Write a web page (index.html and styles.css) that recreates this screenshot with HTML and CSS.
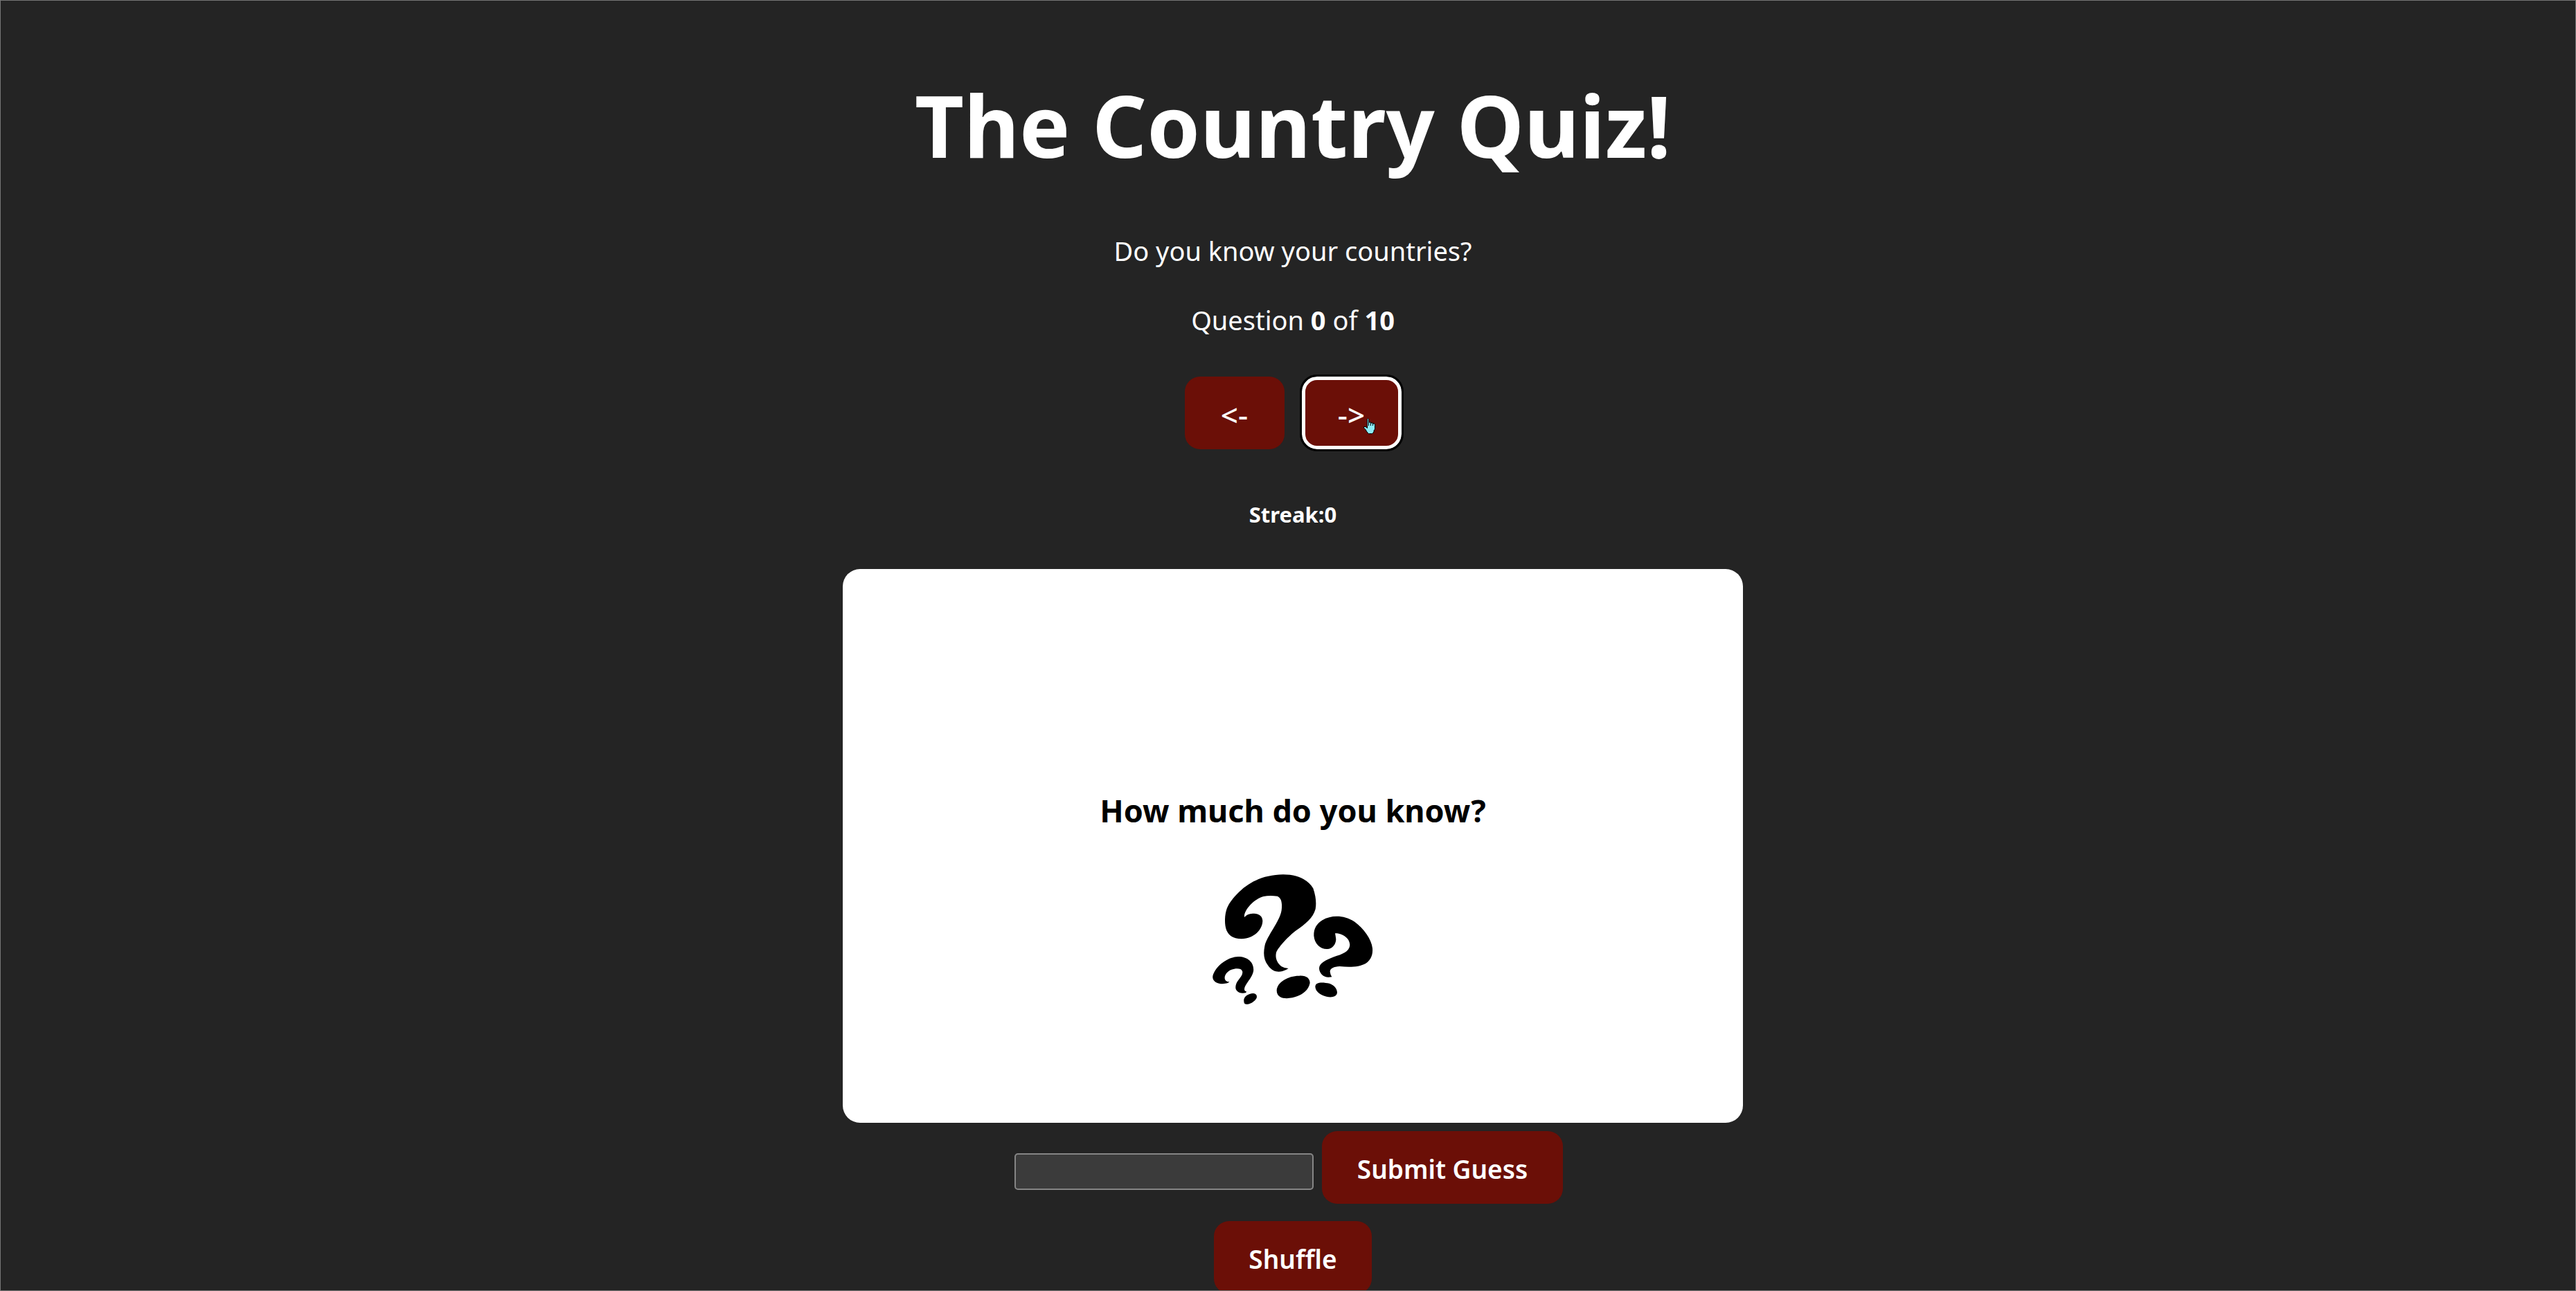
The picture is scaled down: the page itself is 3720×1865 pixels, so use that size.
FILE: index.html
```html
<!DOCTYPE html>
<html lang="en">
<head>
  <meta charset="utf-8">
  <title>The Country Quiz!</title>
  <link rel="stylesheet" href="styles.css">
</head>
<body>
  <main class="app">
    <header class="header">
      <h1 class="title">The Country Quiz!</h1>
      <p class="text">Do you know your countries?</p>
      <p class="text">Question <b>0</b> of <b>10</b></p>
    </header>

    <nav class="nav">
      <button class="button button-arrow" type="button">&lt;-</button>
      <button class="button button-arrow button-focused" type="button">-&gt;
        <svg class="pointer" viewBox="0 0 17 23" aria-hidden="true">
          <path d="M5.500 1.500Q6.500 -.2 7.500 1.500V6H10.500L11 7H13.500L14 8H16L16.500 9V16L15 18V20L12.500 22.500H7.500L5 20L3 16.500L.5 14V12.500H3L5.500 14.500Z" fill="#8cecf8" stroke="#000"/>
          <path d="M7.500 6V11M10.500 6V11M13.500 7V11" fill="none" stroke="#000"/>
        </svg>
      </button>
    </nav>

    <h5 class="streak">Streak:0</h5>

    <section class="card">
      <h3 class="card-title">How much do you know?</h3>
      <svg class="card-art" viewBox="7 0 810 690" role="img" aria-label="Question marks">
        <path d="M202 255C198 225 245 175 285 165Q310 160 345 164C365 172 366 200 363 225C355 275 300 335 290 380C283 415 287 440 303 462C325 495 350 493 367 489Q385 483 393 477Q375 476 362 468C342 452 335 430 340 408C347 390 385 343 430 310C465 286 500 258 510 220Q517 180 500 130C480 95 435 70 370 70C290 71 225 100 180 145C135 190 120 215 118 265C117 310 130 349 190 349C245 348 281 307 281 270C279 242 255 239 238 239C222 240 210 245 202 255Z"/>
        <path d="M595 325C625 324 659 345 659 376C657 405 625 416 590 427C555 440 526 455 526 477C527 500 547 516 567 515Q575 514 581 514Q574 502 573 491C573 477 590 469 615 468C660 473 700 471 728 455C752 440 759 415 757 390C753 350 720 305 680 275C635 246 580 244 540 268C515 283 502 305 503 335C506 370 530 393 560 393C585 392 599 370 599 350Q597 335 595 325Z"/>
        <path d="M137 535C112 535 112 510 127 495C142 479 170 475 185 480C202 490 192 508 178 525C165 540 160 560 167 571C175 583 192 587 207 583Q211 581 211 577C201 576 200 566 205 555C215 535 236 515 241 490C246 455 220 426 175 426C130 428 85 462 68 500C55 530 82 544 108 544C125 543 135 539 137 535Z"/>
        <path d="M342 572C344 535 395 508 440 509C470 507 486 520 486 540C481 570 455 589 430 598C405 608 342 618 342 572Z"/>
        <path d="M509 556C510 533 545 537 570 542C590 549 604 563 604 582C602 601 578 604 558 599C530 593 510 577 509 556Z"/>
        <path d="M200 620C196 600 220 585 240 585C254 586 258 595 255 605C247 620 230 630 215 632Q200 634 200 620Z"/>
      </svg>
    </section>

    <form class="guess">
      <input class="guess-input" type="text" aria-label="Your guess">
      <button class="button button-submit" type="button">Submit Guess</button>
    </form>

    <button class="button button-shuffle" type="button">Shuffle</button>
  </main>
</body>
</html>
```

FILE: styles.css
```css
* {
  box-sizing: border-box;
}

body {
  margin: 0;
  height: 100vh;
  overflow: hidden;
  background: #242424;
  color: #fff;
  font-family: "Noto Sans", "Open Sans", sans-serif;
  font-size: 38px;
}

/* Thin frame round the window */
body::after {
  content: "";
  position: fixed;
  inset: 0;
  border: 1px solid #777;
  pointer-events: none;
}

.app {
  display: flex;
  flex-direction: column;
  align-items: center;
  padding: 111px 0 80px 14px;
  text-align: center;
}

.title {
  margin: 0 0 81px;
  font-size: 123px;
  line-height: 140px;
}

.text {
  margin: 0 0 40px;
  line-height: 60px;
}

.nav {
  display: flex;
  gap: 25px;
  margin-top: 12px;
}

.button {
  flex: none;
  height: 105px;
  padding: 4px 0 0;
  border: 0;
  border-radius: 22px;
  background: #6b0f07;
  color: #fff;
  font-family: inherit;
  font-size: 37px;
  font-weight: 600;
  cursor: pointer;
}

.button-arrow {
  width: 144px;
  font-size: 44px;
  font-weight: 500;
}

.button-focused {
  position: relative;
  border: 5px solid #fff;
  outline: 3px solid #000;
}

.pointer {
  position: absolute;
  left: 84px;
  top: 55px;
  width: 17px;
  height: 23px;
}

.streak {
  margin: 69px 0 54px;
  font-size: 31px;
  line-height: 50px;
}

.card {
  display: flex;
  flex-direction: column;
  align-items: center;
  width: 1300px;
  max-width: 100%;
  min-height: 800px;
  padding-top: 314px;
  border-radius: 25px;
  background: #fff;
  color: #000;
}

.card-title {
  margin: 0 0 34px;
  font-size: 45px;
  line-height: 70px;
}

.card-art {
  width: 270px;
  height: 230px;
}

.guess {
  display: flex;
  align-items: flex-end;
  gap: 12px;
  margin: 12px 12px 25px 0;
}

.guess-input {
  width: 432px;
  height: 53px;
  margin-bottom: 20px;
  padding: 2px 5px;
  border: 2px solid #858585;
  border-radius: 5px;
  background: #3b3b3b;
  color: #fff;
  font-family: inherit;
  font-size: 31px;
}

.button-submit {
  width: 348px;
}

.button-shuffle {
  width: 228px;
}
```
